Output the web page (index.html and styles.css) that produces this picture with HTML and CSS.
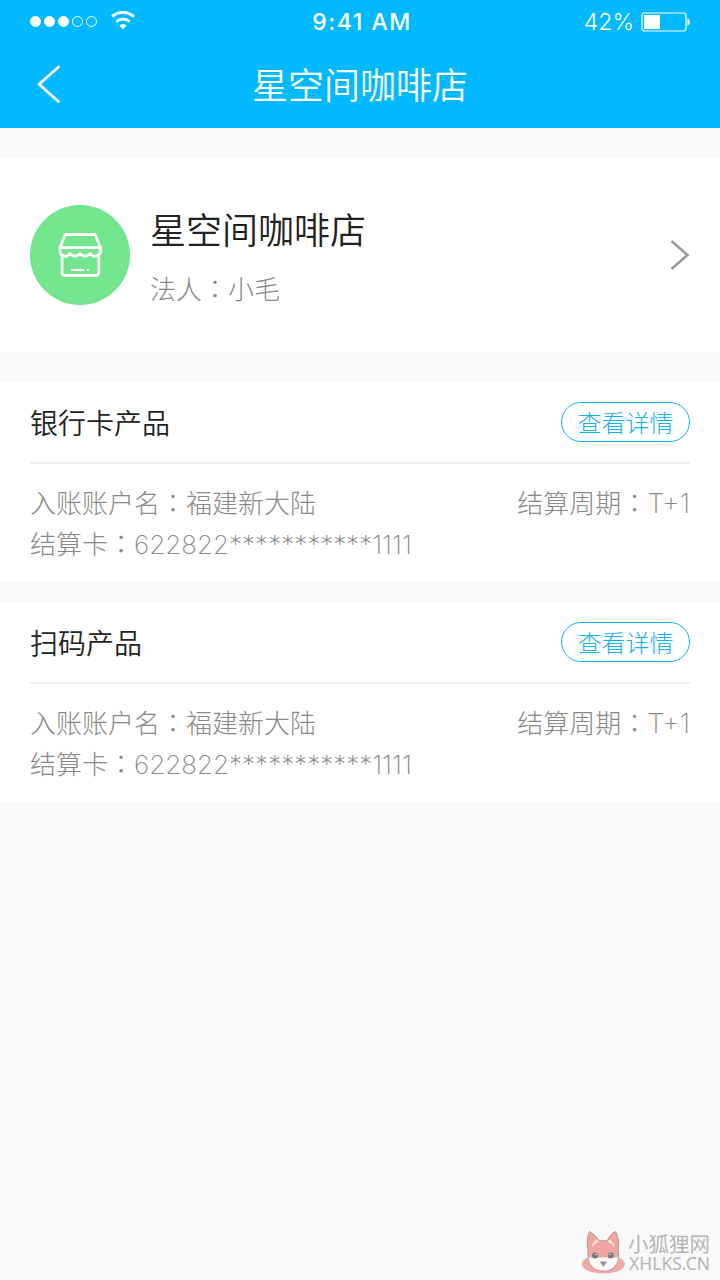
FILE: index.html
```html
<!DOCTYPE html>
<html lang="zh-CN">
<head>
    <meta charset="UTF-8">
    <meta name="viewport" content="width=device-width, initial-scale=1.0">
    <title>星空间咖啡店</title>
    <link rel="stylesheet" href="styles.css">
</head>
<body>
    <div class="page">
        <header class="header">
            <div class="status-bar">
                <div class="signal">
                    <i class="dot full"></i><i class="dot full"></i><i class="dot full"></i><i class="dot"></i><i class="dot"></i>
                    <svg class="wifi" width="26" height="20" viewBox="0 0 26 20">
                        <path d="M2 5.700C8.500-.2 17.500-.2 24 5.700M6.200 10.700C10.200 7.200 15.800 7.200 19.800 10.700" fill="none" stroke="#fff" stroke-width="2.700"/>
                        <path d="M9.300 14.500Q13 11.500 16.700 14.500L13 18.500Z" fill="#fff"/>
                    </svg>
                </div>
                <div class="time">9:41 AM</div>
                <div class="power">
                    <span>42%</span>
                    <svg width="50" height="20" viewBox="0 0 50 20">
                        <rect x="1" y="1" width="44" height="18" rx="2.500" fill="none" stroke="#fff" stroke-width="1.200"/>
                        <path d="M3 3H19V17H3ZM46.500 6Q49 8 49 10T46.500 14Z" fill="#fff"/>
                    </svg>
                </div>
            </div>
            <div class="nav">
                <svg class="back" width="26" height="40" viewBox="0 0 26 40">
                    <path d="M22.500 3L3 20.300L22.500 37.500" fill="none" stroke="#fff" stroke-width="2.800" stroke-linecap="round" stroke-linejoin="round"/>
                </svg>
                <h1>星空间咖啡店</h1>
            </div>
        </header>

        <section class="shop">
            <div class="avatar">
                <svg width="46" height="46" viewBox="0 0 46 46" fill="none" stroke="#fff" stroke-width="2.800" stroke-linecap="round" stroke-linejoin="round">
                    <path d="M8.500 2.500H38L43.500 15.500V20Q43.500 22 41.800 23V40.500Q41.800 43.500 38.800 43.500H8Q5 43.500 5 40.500V23Q3 22 3 20V15.500L8.500 2.500Z"/>
                    <path d="M3.500 15.700H43M4 22Q8.500 27 13 21.500Q18 27 23 21.500Q28 27 33 21.500Q38 27 42 22"/>
                    <path d="M15 38H26.500M30.500 38H31" stroke-width="2.200"/>
                </svg>
            </div>
            <div class="shop-info">
                <h2>星空间咖啡店</h2>
                <p>法人<span class="colon" lang="zh-TW">：</span>小毛</p>
            </div>
            <svg class="arrow" width="22" height="34" viewBox="0 0 22 34">
                <path d="M2.500 3L18.500 17L2.500 31" fill="none" stroke="#999" stroke-width="2.500"/>
            </svg>
        </section>

        <section class="product">
            <div class="product-head">
                <h3>银行卡产品</h3>
                <button class="detail">查看详情</button>
            </div>
            <div class="product-body">
                <div class="row">
                    <span>入账账户名<span class="colon" lang="zh-TW">：</span>福建新大陆</span>
                    <span>结算周期<span class="colon" lang="zh-TW">：</span><span class="cycle">T+1</span></span>
                </div>
                <div class="row">
                    <span>结算卡<span class="colon" lang="zh-TW">：</span><span class="num">622822</span><span class="stars">***********</span><span class="tail">1111</span></span>
                </div>
            </div>
        </section>

        <section class="product">
            <div class="product-head">
                <h3>扫码产品</h3>
                <button class="detail">查看详情</button>
            </div>
            <div class="product-body">
                <div class="row">
                    <span>入账账户名<span class="colon" lang="zh-TW">：</span>福建新大陆</span>
                    <span>结算周期<span class="colon" lang="zh-TW">：</span><span class="cycle">T+1</span></span>
                </div>
                <div class="row">
                    <span>结算卡<span class="colon" lang="zh-TW">：</span><span class="num">622822</span><span class="stars">***********</span><span class="tail">1111</span></span>
                </div>
            </div>
        </section>

        <footer class="mark">
            <svg width="44" height="46" viewBox="0 0 44 46">
                <ellipse cx="22.300" cy="34" rx="21.500" ry="9.500" fill="#f0aaa6"/>
                <path d="M7 20Q5 9 8.500 1.500Q14 4 18.500 11Q22 10 26 11Q29 4 34.500 1.500Q39 9 37 20Q38 24 37.300 28Q35 41 22.300 41Q9.500 41 7.300 28Q6.500 24 7 20Z" fill="#f0a5a1" stroke="#a98985" stroke-width=".8"/>
                <path d="M11 14.500L15.500 9.500L18 11.500Q14 13 11.500 17ZM33.500 14.500L29 9.500L26.500 11.500Q30.500 13 33 17Z" fill="#fbe6d2"/>
                <path d="M7.300 27.500H37.300Q35 40.600 22.300 40.600Q9.500 40.600 7.300 27.500Z" fill="#fcfcfc"/>
                <circle cx="14" cy="25.500" r="3" fill="#77777b"/>
                <circle cx="29.800" cy="25.500" r="3" fill="#77777b"/>
                <circle cx="15" cy="24.500" r=".8" fill="#fff"/>
                <circle cx="29" cy="24.500" r=".8" fill="#fff"/>
                <path d="M18.800 31.500H26L22.400 37Z" fill="#929292"/>
            </svg>
            <div class="mark-text">
                <div class="mark-name">小狐狸网</div>
                <div class="mark-url">XHLKS.CN</div>
            </div>
        </footer>
    </div>
</body>
</html>
```

FILE: styles.css
```css
* { box-sizing: border-box; margin: 0; padding: 0; }
body { background: #f9f9f9; color: #222; font-family: "Noto Sans CJK SC", sans-serif; }
svg { display: block; flex: none; }
h1, h2, h3 { font-weight: 350; }
.page { min-height: 1280px; display: flex; flex-direction: column; }

.header { height: 128px; background: #00b9ff; color: #fff; }
.status-bar { height: 43px; padding: 0 29px 0 30px; display: grid; grid-template-columns: 1fr auto 1fr; align-items: center; font-family: "Liberation Sans", Arial, sans-serif; }
.signal { display: flex; align-items: center; gap: 3px; }
.dot { width: 11px; height: 11px; border: 1px solid #fff; border-radius: 50%; }
.dot.full { background: #fff; }
.wifi { margin-left: 10px; margin-top: -1px; }
.time { padding-left: 3px; font-family: Inter, sans-serif; font-size: 23px; font-weight: 500; letter-spacing: 1.5px; }
.power { display: flex; justify-content: flex-end; align-items: center; gap: 7px; font-family: Inter, sans-serif; font-size: 23px; font-weight: 300; }
.nav { height: 81px; padding: 0 36px; display: grid; grid-template-columns: 26px 1fr 26px; align-items: center; }
.nav h1 { font-size: 36px; line-height: 50px; margin-top: -2px; text-align: center; }

.shop { height: 194px; margin-top: 30px; padding: 0 29px 0 30px; background: #fff; display: flex; align-items: center; }
.avatar { width: 100px; height: 100px; border-radius: 50%; background: #73e58c; display: flex; align-items: center; justify-content: center; }
.shop-info { flex: 1; margin-left: 20px; }
.shop-info h2 { font-size: 36px; line-height: 50px; }
.shop-info p { margin-top: 16px; font-size: 26px; font-weight: 200; line-height: 38px; color: #888; }
.colon { font-family: "Noto Sans CJK TC", sans-serif; }

.product { height: 200px; margin-top: 30px; padding: 0 30px; background: #fff; }
.product + .product { margin-top: 20px; }
.product-head { height: 82px; border-bottom: 2px solid #eee; display: flex; align-items: center; justify-content: space-between; }
.product-head h3 { font-size: 28px; line-height: 40px; }
.detail { width: 129px; height: 40px; border: 1px solid #19b0ea; border-radius: 20px; background: #fff; color: #19b0ea; font-family: inherit; font-size: 24px; font-weight: 300; line-height: 36px; }
.product-body { padding-top: 17px; font-size: 26px; font-weight: 200; line-height: 41px; color: #888; }
.row { height: 41px; display: flex; justify-content: space-between; }
.num, .stars, .tail, .cycle { font-family: Inter, sans-serif; }
.cycle { font-size: 27px; }

.mark { margin-top: auto; padding: 0 10px 4px 0; display: flex; justify-content: flex-end; align-items: center; gap: 3px; color: #b5b5b5; }
.mark-name { font-size: 20.5px; line-height: 20px; }
.mark-url { padding-left: 1px; font-family: "Noto Sans", sans-serif; font-size: 17.5px; line-height: 21px; }
```
